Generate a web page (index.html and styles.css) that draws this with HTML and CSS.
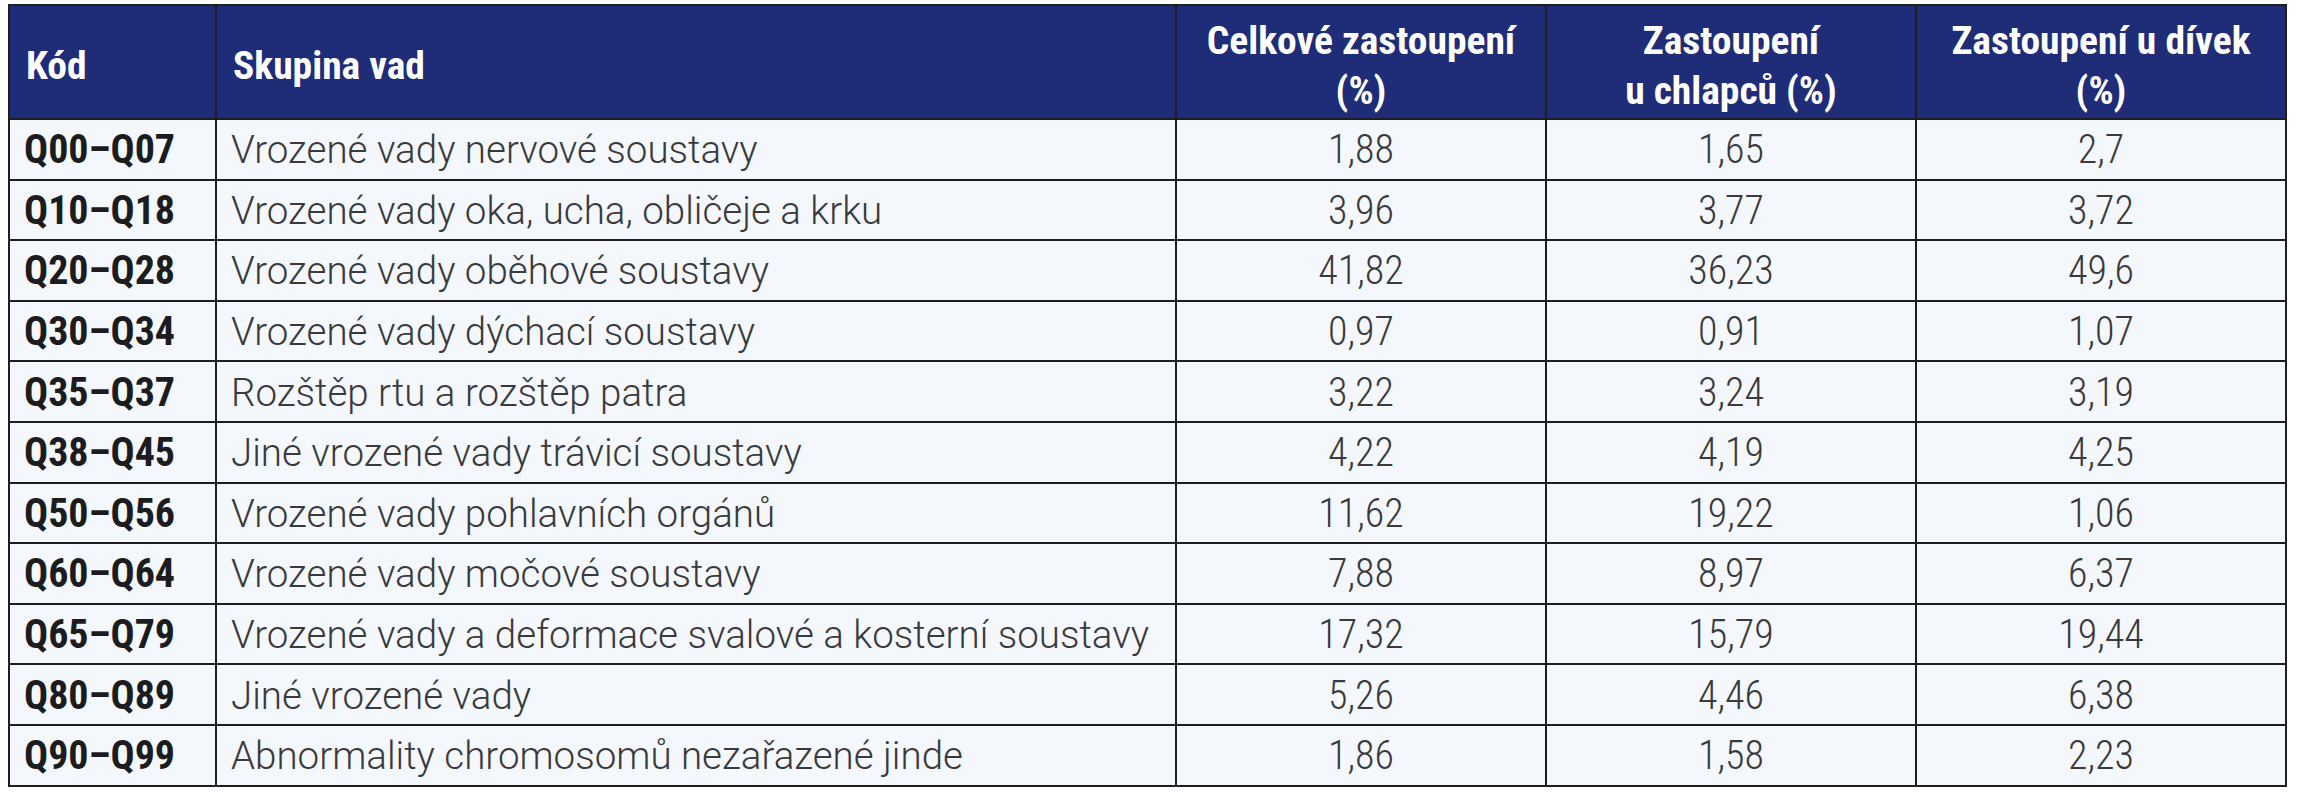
FILE: index.html
```html
<!DOCTYPE html>
<html lang="cs">
<head>
<meta charset="utf-8">
<title>Skupiny vrozených vad</title>
<link rel="stylesheet" href="styles.css">
</head>
<body>
<table class="vady">
  <colgroup>
    <col class="c-kod">
    <col class="c-skup">
    <col class="c-num">
    <col class="c-num">
    <col class="c-num">
  </colgroup>
  <thead>
    <tr>
      <th class="left">Kód</th>
      <th class="left">Skupina vad</th>
      <th>Celkové zastoupení<br>(%)</th>
      <th>Zastoupení<br>u chlapců (%)</th>
      <th>Zastoupení u dívek<br>(%)</th>
    </tr>
  </thead>
  <tbody>
    <tr><td class="kod">Q00–Q07</td><td class="skup">Vrozené vady nervové soustavy</td><td class="num">1,88</td><td class="num">1,65</td><td class="num">2,7</td></tr>
    <tr><td class="kod">Q10–Q18</td><td class="skup">Vrozené vady oka, ucha, obličeje a krku</td><td class="num">3,96</td><td class="num">3,77</td><td class="num">3,72</td></tr>
    <tr><td class="kod">Q20–Q28</td><td class="skup">Vrozené vady oběhové soustavy</td><td class="num">41,82</td><td class="num">36,23</td><td class="num">49,6</td></tr>
    <tr><td class="kod">Q30–Q34</td><td class="skup">Vrozené vady dýchací soustavy</td><td class="num">0,97</td><td class="num">0,91</td><td class="num">1,07</td></tr>
    <tr><td class="kod">Q35–Q37</td><td class="skup">Rozštěp rtu a rozštěp patra</td><td class="num">3,22</td><td class="num">3,24</td><td class="num">3,19</td></tr>
    <tr><td class="kod">Q38–Q45</td><td class="skup">Jiné vrozené vady trávicí soustavy</td><td class="num">4,22</td><td class="num">4,19</td><td class="num">4,25</td></tr>
    <tr><td class="kod">Q50–Q56</td><td class="skup">Vrozené vady pohlavních orgánů</td><td class="num">11,62</td><td class="num">19,22</td><td class="num">1,06</td></tr>
    <tr><td class="kod">Q60–Q64</td><td class="skup">Vrozené vady močové soustavy</td><td class="num">7,88</td><td class="num">8,97</td><td class="num">6,37</td></tr>
    <tr><td class="kod">Q65–Q79</td><td class="skup">Vrozené vady a deformace svalové a kosterní soustavy</td><td class="num">17,32</td><td class="num">15,79</td><td class="num">19,44</td></tr>
    <tr><td class="kod">Q80–Q89</td><td class="skup">Jiné vrozené vady</td><td class="num">5,26</td><td class="num">4,46</td><td class="num">6,38</td></tr>
    <tr><td class="kod">Q90–Q99</td><td class="skup">Abnormality chromosomů nezařazené jinde</td><td class="num">1,86</td><td class="num">1,58</td><td class="num">2,23</td></tr>
  </tbody>
</table>
</body>
</html>
```
FILE: styles.css
```css
body {
  margin: 4px 0 0 8px;
  background: #ffffff;
}

.vady {
  border-collapse: collapse;
  table-layout: fixed;
  width: 2279px;
  font-family: Roboto, "Liberation Sans", sans-serif;
}

.c-kod { width: 207px; }
.c-skup { width: 960px; }
.c-num { width: 370px; }

.vady th,
.vady td {
  border: 2px solid #1e1e22;
  padding: 0 14px;
  vertical-align: middle;
}

.vady thead tr { height: 114px; }

.vady th {
  background: #1f2d78;
  color: #ffffff;
  font-weight: 700;
  font-stretch: 75%;
  font-size: 39.5px;
  line-height: 50px;
  text-align: center;
  padding-top: 8px;
}

.vady th.left { text-align: left; padding-left: 16px; }

.vady tbody tr { height: 60.6px; }

.vady td {
  background: #f4f8fc;
  line-height: 56px;
  padding-top: 2px;
  padding-bottom: 0;
}

.kod {
  font-weight: 700;
  font-stretch: 75%;
  font-size: 40px;
  color: #1c1c1e;
  padding-left: 16px;
  white-space: nowrap;
}

.skup {
  font-weight: 300;
  font-size: 38.5px;
  color: #3a3a3c;
  white-space: nowrap;
}

.num {
  font-weight: 300;
  font-stretch: 75%;
  font-size: 40px;
  color: #3a3a3c;
  text-align: center;
}
```
